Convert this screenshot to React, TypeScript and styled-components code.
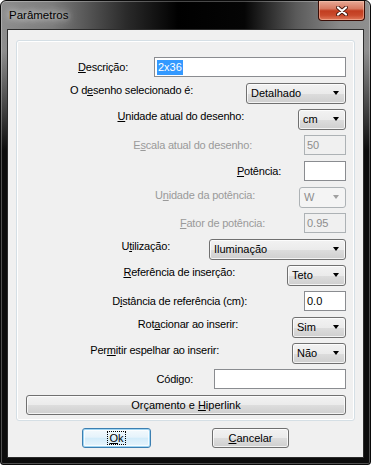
import React from 'react';
import styled, { createGlobalStyle } from 'styled-components';

/* -------------------------------------------------------------------------- */
/* Global                                                                     */
/* -------------------------------------------------------------------------- */

const GlobalStyle = createGlobalStyle`
  html, body {
    margin: 0;
    padding: 0;
    background: #ffffff;
  }
  body {
    font-family: "Liberation Sans", Arial, sans-serif;
  }
`;

/* -------------------------------------------------------------------------- */
/* Window chrome                                                              */
/* -------------------------------------------------------------------------- */

const Window = styled.div`
  width: 371px;
  height: 465px;
  box-sizing: border-box;
  display: flex;
  flex-direction: column;
  border: 1px solid #0a0a0a;
  border-radius: 6px 6px 3px 3px;
  overflow: hidden;
  background:
    linear-gradient(to bottom, rgba(0, 0, 0, 0) 0, rgba(0, 0, 0, 0) 50px, #0c0c0c 150px),
    linear-gradient(
      to right,
      #8e8e8e 0%,
      #7c7c7c 14%,
      #2a2a2a 34%,
      #000 48%,
      #050505 66%,
      #5a5a5a 80%,
      #8a8a8a 92%,
      #8f8f8f 100%
    );
  box-shadow: inset 0 0 0 1px rgba(255, 255, 255, 0.28);
`;

const TitleBar = styled.div`
  height: 28px;
  flex: none;
  display: flex;
  align-items: center;
  justify-content: space-between;
  padding-left: 8px;
`;

const Title = styled.span`
  font-size: 11.5px;
  color: #000;
  text-shadow: 0 0 6px rgba(255, 255, 255, 0.9), 0 0 12px rgba(255, 255, 255, 0.6);
`;

const CloseButton = styled.div`
  align-self: flex-start;
  width: 47px;
  height: 20px;
  margin-right: 5px;
  box-sizing: border-box;
  display: flex;
  align-items: center;
  justify-content: center;
  border: 1px solid #3a0d06;
  border-top: none;
  border-radius: 0 0 4px 4px;
  background: linear-gradient(
    to bottom,
    #e7a996 0%,
    #d77a62 40%,
    #c23d20 52%,
    #c94a2c 75%,
    #e07a5c 100%
  );
  box-shadow: inset 0 0 0 1px rgba(255, 210, 190, 0.45);
`;

const Client = styled.div`
  flex: 1;
  margin: 0 6px 6px 6px;
  display: flex;
  flex-direction: column;
  background: #f0f0f0;
  border: 1px solid #2c2c2c;
`;

/* -------------------------------------------------------------------------- */
/* Form parts                                                                 */
/* -------------------------------------------------------------------------- */

const GroupBox = styled.div`
  margin: 10px 8px 0 8px;
  height: 381px;
  box-sizing: border-box;
  padding: 13px 8px 5px 9px;
  border: 1px solid #d5dfe5;
  border-radius: 3px;
  box-shadow: inset 0 0 0 1px #ffffff;
  display: flex;
  flex-direction: column;
`;

const Row = styled.div`
  height: 26px;
  display: flex;
  align-items: center;
  justify-content: flex-end;
`;

const Label = styled.span<{ $gap: number; $raise?: number; $disabled?: boolean }>`
  font-size: 11px;
  letter-spacing: -0.2px;
  white-space: nowrap;
  color: ${p => (p.$disabled ? '#9a9a9a' : '#000')};
  margin-right: ${p => p.$gap}px;
  margin-bottom: ${p => (p.$raise ?? 0) * 2}px;
`;

const Key = styled.span`
  text-decoration: underline;
  text-underline-offset: 1px;
`;

const TextBox = styled.div<{ $width: number; $disabled?: boolean }>`
  width: ${p => p.$width}px;
  height: 20px;
  box-sizing: border-box;
  display: flex;
  align-items: center;
  padding-left: 2px;
  font-size: 11px;
  border: 1px solid ${p => (p.$disabled ? '#adb2b5' : '#8a8c90')};
  background: ${p => (p.$disabled ? '#f0f0f0' : '#ffffff')};
  color: ${p => (p.$disabled ? '#8d8d8d' : '#000')};
`;

const Selection = styled.span`
  background: #3399ff;
  color: #ffffff;
  padding: 1px 1px 2px 1px;
`;

const Combo = styled.div<{ $width: number; $disabled?: boolean }>`
  width: ${p => p.$width}px;
  height: 21px;
  box-sizing: border-box;
  display: flex;
  align-items: center;
  justify-content: space-between;
  padding: 0 6px 0 4px;
  font-size: 11px;
  border: 1px solid ${p => (p.$disabled ? '#adb2b5' : '#707070')};
  border-radius: 3px;
  color: ${p => (p.$disabled ? '#8d8d8d' : '#000')};
  background: ${p =>
    p.$disabled
      ? '#f4f4f4'
      : 'linear-gradient(to bottom, #f2f2f2 0%, #ebebeb 50%, #dddddd 51%, #cfcfcf 100%)'};
  box-shadow: ${p => (p.$disabled ? 'none' : 'inset 0 0 0 1px rgba(255,255,255,0.75)')};
`;

const Arrow = styled.span<{ $disabled?: boolean }>`
  width: 0;
  height: 0;
  border-left: 3.5px solid transparent;
  border-right: 3.5px solid transparent;
  border-top: 4px solid ${p => (p.$disabled ? '#a0a0a0' : '#000')};
`;

const PushButton = styled.div<{ $width?: number; $default?: boolean }>`
  width: ${p => (p.$width ? `${p.$width}px` : 'auto')};
  height: 20px;
  box-sizing: border-box;
  display: flex;
  align-items: center;
  justify-content: center;
  font-size: 11px;
  color: #000;
  border: 1px solid ${p => (p.$default ? '#3c7fb1' : '#707070')};
  border-radius: 3px;
  background: ${p =>
    p.$default
      ? 'linear-gradient(to bottom, #f4fafd 0%, #e6f3fb 45%, #d3ecfa 52%, #e9f5fc 100%)'
      : 'linear-gradient(to bottom, #f2f2f2 0%, #ebebeb 50%, #dddddd 51%, #cfcfcf 100%)'};
  box-shadow: ${p =>
    p.$default
      ? 'inset 0 0 0 1px #9fd5f3, inset 0 0 0 2px rgba(255,255,255,0.7)'
      : 'inset 0 0 0 1px rgba(255,255,255,0.75)'};
`;

const WideButton = styled(PushButton)`
  margin-top: 3px;
`;

const FocusText = styled.span`
  outline: 1px dotted #000;
  outline-offset: 0;
  padding: 0 1px;
`;

const Footer = styled.div`
  margin-top: 7px;
  display: flex;
  justify-content: center;
  gap: 61px;
`;

/* -------------------------------------------------------------------------- */
/* Component                                                                  */
/* -------------------------------------------------------------------------- */

const CloseGlyph = () => (
  <svg width="12" height="10" viewBox="0 0 12 10">
    <path d="M2 1.5 L10 8.5 M10 1.5 L2 8.5" stroke="#4a1a10" strokeWidth="4" strokeLinecap="round" />
    <path d="M2 1.5 L10 8.5 M10 1.5 L2 8.5" stroke="#ffffff" strokeWidth="2.2" strokeLinecap="round" />
  </svg>
);

export default function App() {
  return (
    <>
      <GlobalStyle />
      <Window>
        <TitleBar>
          <Title>Parâmetros</Title>
          <CloseButton>
            <CloseGlyph />
          </CloseButton>
        </TitleBar>

        <Client>
          <GroupBox>
            <Row>
              <Label $gap={26}><Key>D</Key>escrição:</Label>
              <TextBox $width={192}><Selection>2x36</Selection></TextBox>
            </Row>
            <Row>
              <Label $gap={53} $raise={3.5}>O d<Key>e</Key>senho selecionado é:</Label>
              <Combo $width={100}>Detalhado<Arrow /></Combo>
            </Row>
            <Row>
              <Label $gap={54} $raise={3.5}><Key>U</Key>nidade atual do desenho:</Label>
              <Combo $width={48}>cm<Arrow /></Combo>
            </Row>
            <Row>
              <Label $gap={52} $disabled>E<Key>s</Key>cala atual do desenho:</Label>
              <TextBox $width={42} $disabled>50</TextBox>
            </Row>
            <Row>
              <Label $gap={23}><Key>P</Key>otência:</Label>
              <TextBox $width={42} />
            </Row>
            <Row>
              <Label $gap={44} $raise={2.5} $disabled>U<Key>n</Key>idade da potência:</Label>
              <Combo $width={47} $disabled>W<Arrow $disabled /></Combo>
            </Row>
            <Row>
              <Label $gap={39} $disabled><Key>F</Key>ator de potência:</Label>
              <TextBox $width={42} $disabled>0.95</TextBox>
            </Row>
            <Row>
              <Label $gap={39} $raise={3.5}>U<Key>t</Key>ilização:</Label>
              <Combo $width={137}>Iluminação<Arrow /></Combo>
            </Row>
            <Row>
              <Label $gap={52} $raise={3}><Key>R</Key>eferência de inserção:</Label>
              <Combo $width={59}>Teto<Arrow /></Combo>
            </Row>
            <Row>
              <Label $gap={57}>D<Key>i</Key>stância de referência (cm):</Label>
              <TextBox $width={42}>0.0</TextBox>
            </Row>
            <Row>
              <Label $gap={54} $raise={3.5}>Rot<Key>a</Key>cionar ao inserir:</Label>
              <Combo $width={54}>Sim<Arrow /></Combo>
            </Row>
            <Row>
              <Label $gap={73} $raise={3}>Per<Key>m</Key>itir espelhar ao inserir:</Label>
              <Combo $width={54}>Não<Arrow /></Combo>
            </Row>
            <Row>
              <Label $gap={21}>Código:</Label>
              <TextBox $width={132} />
            </Row>
            <WideButton>
              <span>Orçamento e <Key>H</Key>iperlink</span>
            </WideButton>
          </GroupBox>

          <Footer>
            <PushButton $width={69} $default>
              <FocusText><Key>O</Key>k</FocusText>
            </PushButton>
            <PushButton $width={77}>
              <span><Key>C</Key>ancelar</span>
            </PushButton>
          </Footer>
        </Client>
      </Window>
    </>
  );
}
